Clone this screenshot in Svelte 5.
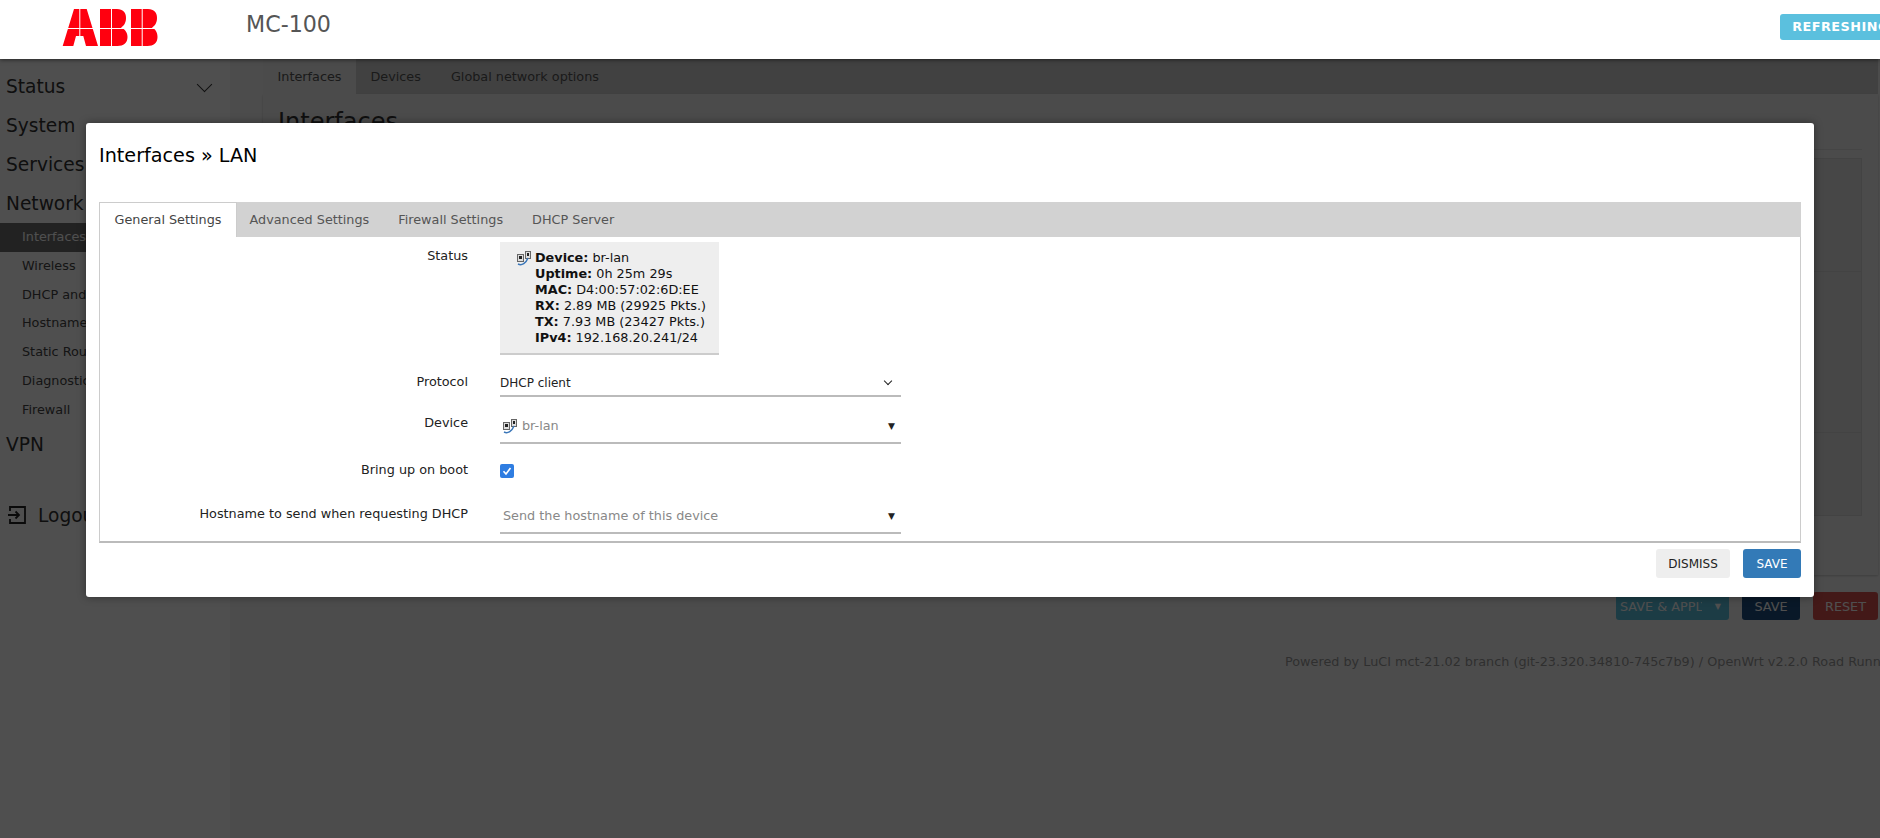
<script lang="ts">
	const nav = ['Wireless', 'DHCP and DNS', 'Hostnames', 'Static Routes', 'Diagnostics', 'Firewall'];
	const tabs = ['General Settings', 'Advanced Settings', 'Firewall Settings', 'DHCP Server'];
	const status = [
		['Device:', 'br-lan'],
		['Uptime:', '0h 25m 29s'],
		['MAC:', 'D4:00:57:02:6D:EE'],
		['RX:', '2.89 MB (29925 Pkts.)'],
		['TX:', '7.93 MB (23427 Pkts.)'],
		['IPv4:', '192.168.20.241/24']
	];
</script>

{#snippet devIcon()}
	<svg class="dev" viewBox="0 0 16 16" width="16" height="16" aria-hidden="true">
		<rect x="1.5" y="4.5" width="6" height="7" fill="#ddd" stroke="#666" />
		<rect x="9.5" y="1.5" width="5" height="7" fill="#ddd" stroke="#666" />
		<rect x="3" y="6" width="3" height="3" fill="#222" />
		<rect x="11" y="3" width="2" height="3" fill="#222" />
		<path d="M2 14c4 2 8-1 10-6" fill="none" stroke="#3a76b8" stroke-width="1.5" />
	</svg>
{/snippet}

<div class="page">
	<header class="top">
		<svg class="logo" viewBox="0 0 96 37" width="96" height="37" aria-hidden="true">
			<path fill="#ff000f" d="M.7 37 12 0h12.7L36 37H24l-2.7-10H14L11.3 37z" />
			<path fill="#ff000f" d="M38 0h17c6 0 9 3.500 9 9 0 4.500-2 8-5 9.500 4 1.500 6.500 5 6.500 9.500 0 6-4 9-10 9H38z" />
			<path fill="#ff000f" d="M69 0h17c6 0 9 3.500 9 9 0 4.500-2 8-5 9.500 3.500 1.500 5.500 5 5.500 9.500 0 6-4 9-10 9H69z" />
			<g fill="#fff">
				<rect x="17.300" y="0" width="1" height="37" />
				<rect x="49" y="0" width="1" height="37" />
				<rect x="79.700" y="0" width="1" height="37" />
				<rect x="0" y="19" width="96" height="1" />
			</g>
		</svg>
		<span class="model">MC-100</span>
		<span class="refresh">REFRESHING</span>
	</header>

	<div class="body">
		<aside class="side">
			<div class="menu">Status <i class="chev"></i></div>
			<div class="menu">System <i class="chev"></i></div>
			<div class="menu">Services <i class="chev"></i></div>
			<div class="menu">Network <i class="chev"></i></div>
			<div class="sub active">Interfaces</div>
			{#each nav as n}
				<div class="sub">{n}</div>
			{/each}
			<div class="menu">VPN</div>
			<div class="logout">
				<svg viewBox="0 0 20 20" width="20" height="20" fill="none" stroke="#222" stroke-width="1.8" aria-hidden="true">
					<path d="M3 6V2h15v16H3v-4M1 10h11M8.500 6.500 12 10l-3.500 3.500" />
				</svg>
				Logout
			</div>
		</aside>

		<main class="main">
			<nav class="ptabs">
				<span class="on">Interfaces</span>
				<span>Devices</span>
				<span>Global network options</span>
			</nav>
			<div class="pcontent">
				<h2>Interfaces</h2>
				<div class="pcard">
					<div class="pslot a"></div>
					<div class="pslot b"></div>
					<div class="pslot c"></div>
				</div>
			</div>
			<div class="pactions">
				<span class="pbtn apply"><span class="clip">SAVE &amp; APPLY</span><small>▼</small></span>
				<span class="pbtn psave">SAVE</span>
				<span class="pbtn preset">RESET</span>
			</div>
			<footer>Powered by LuCI mct-21.02 branch (git-23.320.34810-745c7b9) / OpenWrt v2.2.0 Road Runner</footer>
		</main>
	</div>

	<div class="overlay"></div>

	<section class="modal">
		<h4>Interfaces » LAN</h4>
		<div class="box">
			<ul class="tabs">
				{#each tabs as t, i}
					<li class:on={i === 0}>{t}</li>
				{/each}
			</ul>
			<div class="row first">
				<span class="lbl">Status</span>
				<div class="status">
					{@render devIcon()}
					<div>
						{#each status as [k, v]}
							<div><b>{k}</b> {v}</div>
						{/each}
					</div>
				</div>
			</div>
			<div class="row proto">
				<span class="lbl">Protocol</span>
				<div class="field"><span class="val">DHCP client</span><i class="small-chev"></i></div>
			</div>
			<div class="row dev-row">
				<span class="lbl">Device</span>
				<div class="field"><span class="muted">{@render devIcon()} br-lan</span><span class="arrow">▼</span></div>
			</div>
			<div class="row boot">
				<span class="lbl">Bring up on boot</span>
				<span class="check">
					<svg viewBox="0 0 14 14" width="14" height="14" aria-hidden="true"><path d="M3.500 7.200 6 10l4.500-6" fill="none" stroke="#fff" stroke-width="1.6" /></svg>
				</span>
			</div>
			<div class="row host">
				<span class="lbl">Hostname to send when requesting DHCP</span>
				<div class="field"><span class="muted ph">Send the hostname of this device</span><span class="arrow">▼</span></div>
			</div>
		</div>
		<div class="foot">
			<button type="button" class="dismiss">DISMISS</button>
			<button type="button" class="save">SAVE</button>
		</div>
	</section>
</div>

<style>
	:global(body) {
		margin: 0;
		background: #fff;
		font-family: 'DejaVu Sans', sans-serif;
		overflow: hidden;
	}

	.page {
		position: relative;
		width: 1880px;
		height: 838px;
		overflow: hidden;
		background: #fff;
	}

	.top {
		position: relative;
		z-index: 3;
		display: flex;
		align-items: flex-start;
		height: 59px;
		background: #fff;
		box-shadow: 0 1px 4px rgba(0, 0, 0, 0.5);
	}

	.logo {
		margin: 9px 0 0 62px;
	}

	.model {
		margin: 11px 0 0 88px;
		font-size: 22.2px;
		color: #555;
	}

	.refresh {
		margin: 14px -21px 0 auto;
		height: 26px;
		box-sizing: border-box;
		line-height: 26px;
		padding: 0 12px;
		border-radius: 3px;
		background: #5bc0de;
		color: #fff;
		font-size: 12.8px;
		font-weight: 700;
		letter-spacing: 0.5px;
	}

	.body {
		display: flex;
		height: 779px;
		background: #f6f6f6;
	}

	.side {
		width: 230px;
		flex: none;
		padding-top: 8px;
		box-sizing: border-box;
		background: #fff;
	}

	.menu {
		display: flex;
		justify-content: space-between;
		align-items: center;
		height: 39px;
		padding: 0 20px 0 6px;
		font-size: 18.6px;
		color: #333;
	}

	.chev {
		width: 10px;
		height: 10px;
		margin-top: -5px;
		border-right: 1.5px solid #333;
		border-bottom: 1.5px solid #333;
		transform: rotate(45deg);
	}

	.sub {
		height: 28.8px;
		line-height: 28.8px;
		padding-left: 22px;
		font-size: 12.8px;
		color: #444;
	}

	.sub.active {
		background: #6e6e6e;
		color: #fff;
	}

	.logout {
		display: flex;
		align-items: center;
		gap: 11px;
		margin-top: 41px;
		padding-left: 7px;
		font-size: 18.6px;
		color: #333;
	}

	.main {
		flex: 1;
		margin-left: 33px;
		margin-right: 2px;
		min-width: 0;
	}

	.ptabs {
		display: flex;
		height: 35px;
		background: #d2d2d2;
		font-size: 12.8px;
		color: #555;
		line-height: 35px;
	}

	.ptabs span {
		padding: 0 14.5px;
	}

	.ptabs span + span + span {
		padding-left: 15.5px;
	}

	.ptabs .on {
		background: #f0f0f0;
	}

	.pcontent {
		height: 481px;
		box-sizing: border-box;
		padding: 14px 16px 0 15px;
		background: #f0f0f0;
		box-shadow: 0 1px 2px rgba(0, 0, 0, 0.2);
	}

	h2 {
		margin: 0;
		height: 42px;
		box-sizing: border-box;
		border-bottom: 1px solid #ddd;
		font-size: 24px;
		line-height: 28px;
		font-weight: 400;
		color: #333;
	}

	.pcard {
		margin-top: 8px;
		border: 1px solid #d8d8d8;
		background: #e6e6e6;
	}

	.pslot {
		border-bottom: 1px solid #d8d8d8;
	}

	.pslot.a { height: 112px; }
	.pslot.b { height: 160px; }
	.pslot.c { height: 82px; border-bottom: 0; }

	.pactions {
		display: flex;
		justify-content: flex-end;
		gap: 13px;
		margin-top: 17px;
	}

	.pbtn {
		height: 28px;
		line-height: 30px;
		text-align: center;
		border-radius: 3px;
		font-size: 12.8px;
		color: #fff;
	}

	.apply {
		display: flex;
		width: 113px;
		padding: 0 8px 0 4px;
		box-sizing: border-box;
		justify-content: space-between;
		background: #5bc0de;
	}

	.clip {
		width: 82px;
		overflow: hidden;
		white-space: nowrap;
		text-align: left;
	}

	.apply small {
		font-size: 8px;
	}

	.psave { width: 58px; background: #1f4f80; }
	.preset { width: 65px; background: #d9534f; }

	footer {
		margin-top: 34px;
		padding-left: 1022px;
		font-size: 12.8px;
		white-space: nowrap;
		color: #999;
	}

	.overlay {
		position: absolute;
		inset: 0;
		z-index: 2;
		background: rgba(0, 0, 0, 0.69);
	}

	.modal {
		position: absolute;
		z-index: 4;
		left: 86px;
		top: 123px;
		width: 1728px;
		height: 474px;
		box-sizing: border-box;
		padding: 0 13px;
		border-radius: 3px;
		background: #fff;
		box-shadow: 0 0 8px rgba(0, 0, 0, 0.4);
	}

	h4 {
		margin: 0;
		padding-top: 21px;
		height: 79px;
		box-sizing: border-box;
		font-size: 19.2px;
		font-weight: 400;
		color: #000;
	}

	.box {
		height: 341px;
		box-sizing: border-box;
		border: 1px solid #ccc;
		border-top: 0;
		border-bottom: 2px solid #bbb;
		font-size: 12.8px;
		color: #222;
	}

	.tabs {
		display: flex;
		margin: 0 -1px;
		padding: 0;
		list-style: none;
		height: 35px;
		background: #d2d2d2;
		color: #555;
		line-height: 35px;
	}

	.tabs li {
		padding: 0 14.5px;
	}

	.tabs li.on {
		margin-right: -2px;
		background: #fff;
		border: 1px solid #ccc;
		border-bottom: 0;
		line-height: 34px;
		color: #444;
	}

	.row {
		display: flex;
	}

	.lbl {
		width: 368px;
		margin-right: 32px;
		text-align: right;
		flex: none;
		font-size: 12.8px;
		color: #222;
		padding-top: 6px;
	}

	.first {
		margin-top: 5px;
	}

	.status {
		display: flex;
		gap: 3px;
		width: 219px;
		box-sizing: border-box;
		padding: 8px 0 7px 16px;
		background: #eee;
		border-bottom: 2px solid #ccc;
		line-height: 16px;
		font-size: 12.8px;
		color: #111;
	}

	.dev {
		flex: none;
	}

	.field {
		display: flex;
		justify-content: space-between;
		align-items: center;
		width: 401px;
		height: 35px;
		box-sizing: border-box;
		padding: 0 6px 0 0;
		border-bottom: 2px solid #bbb;
	}

	.proto {
		margin-top: 7px;
	}

	.proto .lbl {
		padding-top: 12px;
	}

	.proto .field {
		padding-top: 8px;
	}

	.val {
		font-size: 12px;
	}

	.small-chev {
		width: 5px;
		height: 5px;
		margin: -3px 4px 0 0;
		border-right: 1px solid #222;
		border-bottom: 1px solid #222;
		transform: rotate(45deg);
	}

	.dev-row {
		margin-top: 12px;
	}

	.muted {
		display: flex;
		align-items: center;
		gap: 4px;
		color: #888;
		padding-left: 2px;
	}

	.ph {
		padding-left: 3px;
	}

	.arrow {
		font-size: 9px;
		color: #222;
	}

	.boot {
		height: 43px;
		margin-top: 12px;
	}

	.check {
		display: grid;
		place-items: center;
		width: 14px;
		height: 14px;
		margin-top: 8px;
		border-radius: 2px;
		background: #2f7de1;
	}

	.host .lbl {
		padding-top: 7px;
	}

	.foot {
		display: flex;
		justify-content: flex-end;
		gap: 13px;
		margin-top: 6px;
	}

	button {
		height: 29px;
		padding: 0;
		border: 0;
		border-radius: 3px;
		font: 12px 'DejaVu Sans', sans-serif;
	}

	.dismiss {
		width: 74px;
		background: #eee;
		color: #222;
	}

	.save {
		width: 58px;
		background: #337ab7;
		color: #fff;
	}
</style>
